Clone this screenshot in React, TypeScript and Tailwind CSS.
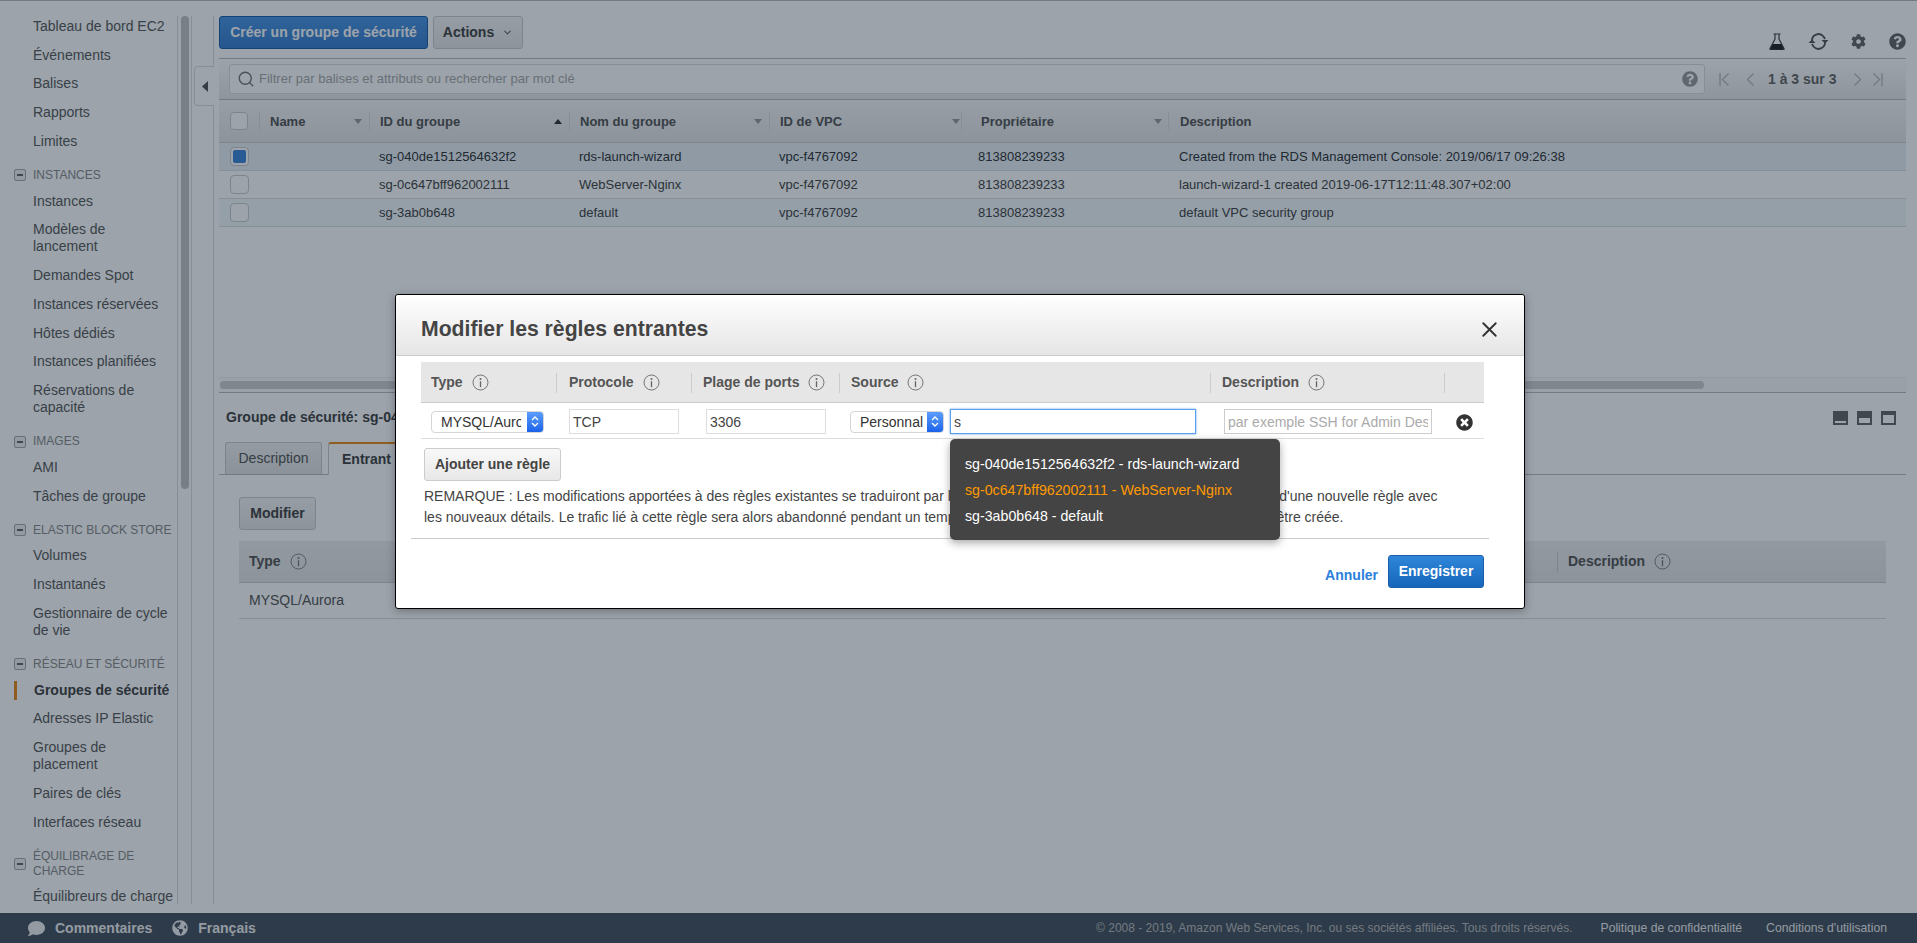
import { ChevronDown, Search, X } from 'lucide-react'
import { FaCog, FaComment, FaGlobeAmericas, FaQuestionCircle, FaTimesCircle } from 'react-icons/fa'

type NavEntry = { label: string; section?: boolean; active?: boolean }

const navEntries: NavEntry[] = [
  { label: 'Tableau de bord EC2' },
  { label: 'Événements' },
  { label: 'Balises' },
  { label: 'Rapports' },
  { label: 'Limites' },
  { label: 'INSTANCES', section: true },
  { label: 'Instances' },
  { label: 'Modèles de\nlancement' },
  { label: 'Demandes Spot' },
  { label: 'Instances réservées' },
  { label: 'Hôtes dédiés' },
  { label: 'Instances planifiées' },
  { label: 'Réservations de\ncapacité' },
  { label: 'IMAGES', section: true },
  { label: 'AMI' },
  { label: 'Tâches de groupe' },
  { label: 'ELASTIC BLOCK STORE', section: true },
  { label: 'Volumes' },
  { label: 'Instantanés' },
  { label: 'Gestionnaire de cycle\nde vie' },
  { label: 'RÉSEAU ET SÉCURITÉ', section: true },
  { label: 'Groupes de sécurité', active: true },
  { label: 'Adresses IP Elastic' },
  { label: 'Groupes de\nplacement' },
  { label: 'Paires de clés' },
  { label: 'Interfaces réseau' },
  { label: 'ÉQUILIBRAGE DE\nCHARGE', section: true },
  { label: 'Équilibreurs de charge' },
]

const groupColumns = [
  { label: 'Name', arrow: 'down', cell: 'pl-[10px] pr-[7px]' },
  { label: 'ID du groupe', arrow: 'up', cell: 'pl-[10px] pr-[7px]' },
  { label: 'Nom du groupe', arrow: 'down', cell: 'pl-[10px] pr-[7px]' },
  { label: 'ID de VPC', arrow: 'down', cell: 'pl-[10px] pr-[1px]' },
  { label: 'Propriétaire', arrow: 'down', cell: 'pl-[19px] pr-[6px]' },
  { label: 'Description', arrow: '', cell: 'pl-[11px]' },
]

const groupRows = [
  {
    id: 'sg-040de1512564632f2',
    name: 'rds-launch-wizard',
    description: 'Created from the RDS Management Console: 2019/06/17 09:26:38',
    rowClass: 'bg-[#eaf1f7] text-[#333]',
    selected: true,
  },
  {
    id: 'sg-0c647bff962002111',
    name: 'WebServer-Nginx',
    description: 'launch-wizard-1 created 2019-06-17T12:11:48.307+02:00',
    rowClass: 'bg-white text-[#444]',
    selected: false,
  },
  {
    id: 'sg-3ab0b648',
    name: 'default',
    description: 'default VPC security group',
    rowClass: 'bg-[#f4f8fb] text-[#444]',
    selected: false,
  },
]

const ruleColumns = [
  { label: 'Type', width: 'w-[135px]', pad: 'pl-[10px]' },
  { label: 'Protocole', width: 'w-[135px]', pad: 'pl-[12px]' },
  { label: 'Plage de ports', width: 'w-[148px]', pad: 'pl-[11px]' },
  { label: 'Source', width: 'w-[371px]', pad: 'pl-[11px]' },
  { label: 'Description', width: 'w-[234px]', pad: 'pl-[11px]' },
]

function InfoIcon() {
  return (
    <svg width="17" height="17" viewBox="0 0 17 17" fill="none" className="shrink-0">
      <circle cx="8.5" cy="8.5" r="7.5" stroke="currentColor" strokeWidth="0.9" />
      <circle cx="8.5" cy="4.9" r="1" fill="currentColor" />
      <path d="M8.5 7.2v6" stroke="currentColor" strokeWidth="1.3" />
    </svg>
  )
}

function SortArrow({ up }: { up: boolean }) {
  return (
    <svg width="8" height="5" viewBox="0 0 8 5" className="text-[#9a9a9a]">
      <path d={up ? 'M0 5l4-5 4 5z' : 'M0 0l4 5 4-5z'} fill={up ? '#333' : 'currentColor'} />
    </svg>
  )
}

function SectionToggle() {
  return (
    <span className="flex h-[12px] w-[12px] shrink-0 items-center justify-center rounded-[2px] border border-[#aaa] bg-[#eee]">
      <span className="h-[2px] w-[6px] bg-[#666]" />
    </span>
  )
}

function Sidebar() {
  return (
    <nav className="w-[177px] shrink-0 overflow-hidden pt-[11px] text-[14px] leading-[17px] text-[#5a5a5a]">
      {navEntries.map((entry) =>
        entry.section ? (
          <div key={entry.label} className="flex items-center whitespace-pre-line pb-[4px] pl-[14px] pt-[12px] text-[12px] leading-[15px] text-[#8a8a8a]">
            <SectionToggle />
            <span className="ml-[7px]">{entry.label}</span>
          </div>
        ) : entry.active ? (
          <div key={entry.label} className="relative py-[5.875px] pl-[34px] font-bold text-[#444]">
            <span className="absolute left-[14px] top-[5px] h-[19px] w-[3px] bg-[#ec8b1c]" />
            {entry.label}
          </div>
        ) : (
          <div key={entry.label} className="whitespace-pre-line py-[5.875px] pl-[33px]">
            {entry.label}
          </div>
        ),
      )}
    </nav>
  )
}

function FlaskIcon() {
  return (
    <svg width="16" height="17" viewBox="0 0 16 17">
      <path d="M4.5 1h7M6 1v5L1 15.5c-.3.6 0 1 .6 1h12.8c.6 0 .9-.4.6-1L10 6V1" fill="none" stroke="#444" strokeWidth="1.2" />
      <path d="M3.6 11h8.8l2.6 5.5H1z" fill="#222" />
    </svg>
  )
}

function RefreshIcon() {
  return (
    <svg width="21" height="17" viewBox="0 0 21 17" fill="none" stroke="#555" strokeWidth="1.8">
      <path d="M4 8a6.5 6.5 0 0 1 11.5-4.5L17 6" />
      <path d="M17 9a6.5 6.5 0 0 1-11.5 4.5L4 11" />
      <path d="M13.5 7h7l-3.500 3.500z" fill="#555" stroke="none" />
      <path d="M0.500 10h7l-3.500-3.500z" fill="#555" stroke="none" />
    </svg>
  )
}

function PagerIcon({ flip, bar }: { flip?: boolean; bar?: boolean }) {
  return (
    <svg width="11" height="13" viewBox="0 0 11 13" fill="none" stroke="#bbb" strokeWidth="1.4" className={flip ? 'rotate-180' : ''}>
      {bar && <path d="M1 0v13" />}
      <path d="M9.500 0.500L3.500 6.500l6 6" />
    </svg>
  )
}

function PaneIcon({ bar }: { bar: string }) {
  return (
    <span className="flex h-[14px] w-[15px] flex-col justify-end bg-[#666]">
      <span className={bar} />
    </span>
  )
}

function Checkbox({ checked, large }: { checked?: boolean; large?: boolean }) {
  return (
    <span className={`flex items-center justify-center rounded-[4px] border border-[#ccc] bg-white ${large ? 'h-[19px] w-[19px]' : 'h-[18px] w-[18px]'}`}>
      {checked && <span className="h-[13px] w-[13px] rounded-[2px] bg-[#3f87d9]" />}
    </span>
  )
}

function NativeSelect({ text, width, gap }: { text: string; width: string; gap: string }) {
  return (
    <div className={`flex h-[22px] items-stretch overflow-hidden rounded-[4px] border border-[#d5d5d5] bg-white text-[14px] leading-[20px] text-[#333] ${width}`}>
      <span className={`min-w-0 flex-1 overflow-hidden whitespace-nowrap pl-[9px] ${gap}`}>{text}</span>
      <span className="flex w-[16px] shrink-0 items-center justify-center bg-gradient-to-b from-[#5c9dfb] to-[#1a62ea]">
        <svg width="8" height="13" viewBox="0 0 8 13" fill="none" stroke="white" strokeWidth="1.4">
          <path d="M1 5l3-3 3 3M1 8l3 3 3-3" />
        </svg>
      </span>
    </div>
  )
}

function RulesModal() {
  return (
    <div className="ml-[395px] mt-[294px] h-[315px] w-[1130px] rounded-[3px] border border-black bg-white text-[#444] shadow-[0_2px_10px_rgba(0,0,0,0.3)]">
      <div className="flex h-[61px] items-center justify-between rounded-t-[3px] border-b border-[#ccc] bg-gradient-to-b from-white to-[#e5e5e5] pl-[25px] pr-[22px] pt-[8px]">
        <h2 className="text-[21.2px] font-bold text-[#444]">Modifier les règles entrantes</h2>
        <X size={25} strokeWidth={1.8} className="text-[#333]" />
      </div>

      <div className="mx-[25px] mt-[6px] w-[1063px]">
        <div className="flex h-[41px] items-center border-b border-[#ccc] bg-[#e6e6e6] pt-px text-[14px] font-bold text-[#555]">
          {ruleColumns.map((col, i) => (
            <div key={col.label} className={`flex h-[20px] items-center gap-[9px] ${col.width} ${col.pad} ${i > 0 ? 'border-l border-[#ccc]' : ''}`}>
              {col.label}
              <span className="font-normal text-[#666]">
                <InfoIcon />
              </span>
            </div>
          ))}
          <div className="h-[20px] border-l border-[#ccc]" />
        </div>

        <div className="flex h-[36px] items-center border-b border-[#ddd] pt-[2px] text-[14px] text-[#444]">
          <div className="ml-[10px]">
            <NativeSelect text="MYSQL/Aurora" width="w-[113px]" gap="mr-[6px]" />
          </div>
          <input readOnly value="TCP" className="ml-[25px] h-[25px] w-[110px] border border-[#ddd] px-[3px] outline-none" />
          <input readOnly value="3306" className="ml-[27px] h-[25px] w-[120px] border border-[#ddd] px-[3px] outline-none" />
          <div className="ml-[24px]">
            <NativeSelect text="Personnalisé" width="w-[94px]" gap="mr-[4px]" />
          </div>
          <div className="relative ml-[6px]">
            <input readOnly value="s" className="h-[25px] w-[246px] border border-[#5aa0f0] px-[3px] shadow-[0_0_2px_#5aa0f0] outline-none" />
            <div className="absolute left-0 top-[30px] z-10 h-[101px] w-[330px] rounded-[5px] bg-[#444] py-[12px] pl-[15px] text-[14.2px] leading-[26px] text-white shadow-[0_3px_8px_rgba(0,0,0,0.35)]">
              <div>sg-040de1512564632f2 - rds-launch-wizard</div>
              <div className="text-[#f90]">sg-0c647bff962002111 - WebServer-Nginx</div>
              <div>sg-3ab0b648 - default</div>
            </div>
          </div>
          <input readOnly placeholder="par exemple SSH for Admin Desktop" className="ml-[28px] h-[25px] w-[208px] border border-[#ccc] px-[3px] outline-none placeholder:text-[#aaa]" />
          <FaTimesCircle size={17} className="ml-[24px] mt-[1px] text-[#333]" />
        </div>

        <button className="ml-[3px] mt-[9px] h-[33px] w-[137px] rounded-[3px] border border-[#ccc] bg-gradient-to-b from-[#f8f8f8] to-[#e8e8e8] text-[14px] font-bold text-[#444]">
          Ajouter une règle
        </button>
        <p className="ml-[3px] mt-[5px] w-[1020px] text-[14px] leading-[21px] text-[#444]">
          REMARQUE : Les modifications apportées à des règles existantes se traduiront par la suppression de la règle existante et par la création d'une nouvelle règle avec les nouveaux détails. Le trafic lié à cette règle sera alors abandonné pendant un temps très court, jusqu'à ce que la nouvelle règle puisse être créée.
        </p>
      </div>

      <div className="mx-[15px] mt-[10px] w-[1078px] border-t border-[#ccc]" />
      <div className="mt-[16px] flex items-center justify-end pr-[40px]">
        <a className="mr-[10px] mt-[7px] text-[14px] font-bold text-[#2a7fdc]">Annuler</a>
        <button className="h-[33px] w-[96px] rounded-[3px] border border-[#1a5fa8] bg-gradient-to-b from-[#2f86d8] to-[#1566bb] text-[14px] font-bold text-white">
          Enregistrer
        </button>
      </div>
    </div>
  )
}

export default function App() {
  return (
    <div className="relative flex h-screen w-full flex-col overflow-hidden bg-white [font-family:'Liberation_Sans',Arial,sans-serif]">
      <div className="flex min-h-0 flex-1 border-t border-[#bbb] pb-[9px]">
        <Sidebar />

        {/* nav scroll track */}
        <div className="mt-[15px] w-[15px] shrink-0 border-x border-[#ddd] px-[3px]">
          <div className="h-[473px] w-[8px] rounded-[4px] bg-[#c3c3c3]" />
        </div>

        {/* collapse handle */}
        <div className="mt-[15px] w-[22px] shrink-0 border-r border-[#ddd]">
          <div className="-mr-px ml-[2px] mt-[50px] flex h-[40px] items-center justify-center rounded-l-[4px] border border-r-0 border-[#ddd] bg-white">
            <svg width="6" height="11" viewBox="0 0 6 11">
              <path d="M6 0L0 5.500 6 11z" fill="#555" />
            </svg>
          </div>
        </div>

        <main className="flex min-w-0 flex-1 flex-col pl-[5px] pr-[11px] text-[13px] text-[#444]">
          {/* toolbar */}
          <div className="mt-[15px] flex h-[33px] items-center">
            <button className="h-[33px] w-[209px] rounded-[3px] border border-[#1a5fa8] bg-gradient-to-b from-[#4b96e4] to-[#3a7fd0] text-[14px] font-bold text-white">
              Créer un groupe de sécurité
            </button>
            <button className="ml-[5px] flex h-[33px] w-[90px] items-center justify-center gap-[8px] rounded-[3px] border border-[#ccc] bg-gradient-to-b from-[#f5f5f5] to-[#e6e6e6] text-[14px] font-bold text-[#444]">
              Actions
              <ChevronDown size={11} strokeWidth={2.5} className="text-[#666]" />
            </button>
            <div className="ml-auto mt-[17px] flex items-center pr-0">
              <FlaskIcon />
              <span className="ml-[23px]"><RefreshIcon /></span>
              <FaCog size={15} className="ml-[22px] text-[#666]" />
              <FaQuestionCircle size={17} className="ml-[23px] text-[#666]" />
            </div>
          </div>

          {/* filter bar */}
          <div className="mt-[9px] flex h-[42px] items-center border-y border-[#bbb] bg-gradient-to-b from-white to-[#e8e8e8] pl-[10px]">
            <div className="flex h-[30px] w-[1476px] items-center rounded-[3px] border border-[#ddd] bg-white pl-[7px] pr-[6px] text-[13px] text-[#aaa]">
              <Search size={18} strokeWidth={1.8} className="text-[#777]" />
              <span className="ml-[4px]">Filtrer par balises et attributs ou rechercher par mot clé</span>
              <FaQuestionCircle size={16} className="ml-auto text-[#999]" />
            </div>
            <div className="ml-[14px] flex items-center text-[14px] font-bold text-[#666]">
              <PagerIcon bar />
              <span className="ml-[14px]"><PagerIcon /></span>
              <span className="ml-[13px] w-[76px] whitespace-nowrap">1 à 3 sur 3</span>
              <span className="ml-[9px]"><PagerIcon flip /></span>
              <span className="ml-[8px]"><PagerIcon flip bar /></span>
            </div>
          </div>

          {/* groups table */}
          <div className="grid h-[43px] grid-cols-[40px_110px_200px_200px_192px_207px_1fr] items-center border-b border-[#ccc] bg-gradient-to-b from-[#f7f7f7] to-[#e5e5e5] text-[13px] font-bold text-[#555]">
            <div className="pl-[11px]">
              <Checkbox />
            </div>
            {groupColumns.map((col) => (
              <div key={col.label} className={`flex h-[18px] items-center justify-between border-l border-[#ddd] pt-px ${col.cell}`}>
                {col.label}
                {col.arrow && <SortArrow up={col.arrow === 'up'} />}
              </div>
            ))}
          </div>
          {groupRows.map((row) => (
            <div key={row.id} className={`grid h-[28px] grid-cols-[40px_110px_200px_200px_192px_207px_1fr] items-center border-b border-[#ddd] ${row.rowClass}`}>
              <div className="pl-[11px]">
                <Checkbox checked={row.selected} large />
              </div>
              <div />
              <div className="pl-[10px]">{row.id}</div>
              <div className="pl-[10px]">{row.name}</div>
              <div className="pl-[10px]">vpc-f4767092</div>
              <div className="pl-[17px]">813808239233</div>
              <div className="pl-[11px]">{row.description}</div>
            </div>
          ))}

          <div className="h-[150px]" />

          {/* split pane */}
          <div className="flex h-[16px] items-center border-y border-[#eee] border-b-[#bbb] bg-[#fafafa]">
            <div className="ml-px h-[8px] w-[1484px] rounded-[4px] bg-[#cfcfcf]" />
          </div>

          <div className="flex h-[49px] items-center justify-between pl-[7px] pr-[10px]">
            <span className="text-[14px] font-bold text-[#444]">Groupe de sécurité: sg-040de1512564632f2</span>
            <div className="flex gap-[9px]">
              <PaneIcon bar="mx-[2px] mb-[2px] h-[2px] bg-white" />
              <PaneIcon bar="mx-[2px] mb-[2px] h-[5px] bg-white" />
              <PaneIcon bar="mx-[2px] mb-[2px] h-[8px] bg-white" />
            </div>
          </div>

          <div className="flex h-[33px] items-end border-b border-[#bbb] pl-[6px] text-[14px]">
            <div className="flex h-[32px] w-[97px] items-center justify-center rounded-t-[3px] border border-b-0 border-[#ccc] bg-gradient-to-b from-[#f2f2f2] to-[#e3e3e3] text-[#555]">Description</div>
            <div className="relative top-px ml-[6px] flex h-[33px] w-[120px] items-center rounded-t-[3px] border-x border-t-2 border-[#ccc] border-t-[#ec8b1c] bg-white pl-[13px] font-bold text-[#444]">Entrant</div>
          </div>

          <div className="pl-[20px] pr-[20px]">
            <button className="mt-[22px] block h-[33px] w-[77px] rounded-[3px] border border-[#ccc] bg-gradient-to-b from-[#f5f5f5] to-[#e6e6e6] text-[14px] font-bold text-[#444]">Modifier</button>
            <div className="mt-[11px] grid h-[42px] grid-cols-[1318px_1fr] items-center border-b border-[#ccc] bg-gradient-to-b from-[#efefef] to-[#e5e5e5] text-[14px] font-bold text-[#555]">
              <div className="flex items-center gap-[9px] pl-[10px]">
                Type
                <span className="font-normal text-[#777]"><InfoIcon /></span>
              </div>
              <div className="flex h-[20px] items-center gap-[9px] border-l border-[#ccc] pl-[10px]">
                Description
                <span className="font-normal text-[#777]"><InfoIcon /></span>
              </div>
            </div>
            <div className="flex h-[36px] items-center border-b border-[#ddd] pl-[10px] text-[14px] text-[#555]">MYSQL/Aurora</div>
          </div>
        </main>
      </div>

      <footer className="flex h-[30px] shrink-0 items-center bg-[#49535f] pl-[28px] pr-[30px] text-[12px]">
        <FaComment size={17} className="text-[#f0f0f0]" />
        <span className="ml-[10px] text-[14px] font-bold text-[#f0f0f0]">Commentaires</span>
        <FaGlobeAmericas size={16} className="ml-[20px] text-[#f0f0f0]" />
        <span className="ml-[10px] text-[14px] font-bold text-[#f0f0f0]">Français</span>
        <span className="ml-auto text-[#bbb]">© 2008 - 2019, Amazon Web Services, Inc. ou ses sociétés affiliées. Tous droits réservés.</span>
        <span className="ml-[28px] text-[12.2px] text-[#eee]">Politique de confidentialité</span>
        <span className="ml-[24px] text-[12.2px] text-[#eee]">Conditions d'utilisation</span>
      </footer>

      {/* modal backdrop */}
      <div className="absolute inset-0 bg-[#08192a]/40">
        <RulesModal />
      </div>
    </div>
  )
}
